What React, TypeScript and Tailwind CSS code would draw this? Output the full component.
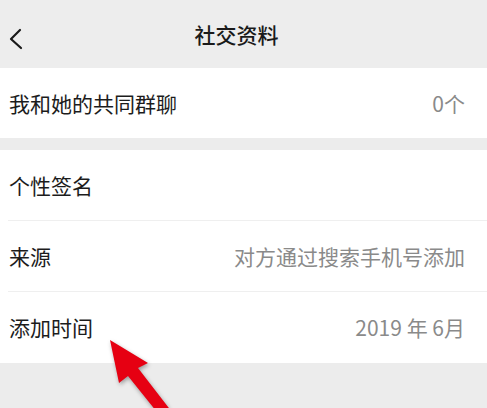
import React from "react";

const font = { fontFamily: '"Noto Sans CJK SC", "Noto Sans", sans-serif' };

function Row({ label, value, border }: { label: string; value?: string; border?: boolean }) {
  return (
    <div className="relative flex h-[71px] items-center justify-between pl-[9px] pr-[22px]">
      <span className="text-[21px] text-[#1c1c1c] leading-none">{label}</span>
      {value && <span className="text-[21px] text-[#8a8a8a] leading-none">{value}</span>}
      {border && <div className="absolute bottom-0 left-[8px] right-0 h-px bg-[#efefef]" />}
    </div>
  );
}

export default function App() {
  return (
    <div className="relative h-[408px] w-full overflow-hidden bg-[#ececec]" style={font}>
      <div className="relative flex h-[68px] items-center justify-center bg-[#ededed] pr-[14px]">
        <svg className="absolute left-[8px] top-[28px]" width="16" height="22" viewBox="0 0 16 22">
          <path d="M12 2 L3 11 L13 20" fill="none" stroke="#1a1a1a" strokeWidth="2.2" strokeLinecap="round" strokeLinejoin="round" />
        </svg>
        <span className="text-[21px] font-medium text-[#1a1a1a] leading-none">社交资料</span>
      </div>
      <div className="bg-white">
        <div className="flex h-[70px] items-center justify-between pl-[9px] pr-[22px]">
          <span className="text-[21px] text-[#1c1c1c] leading-none">我和她的共同群聊</span>
          <span className="text-[21px] text-[#8a8a8a] leading-none">0个</span>
        </div>
      </div>
      <div className="h-[12px]" />
      <div className="bg-white">
        <Row label="个性签名" border />
        <Row label="来源" value="对方通过搜索手机号添加" border />
        <Row label="添加时间" value="2019 年 6月" />
      </div>
      <svg className="absolute left-0 top-0" width="487" height="408" viewBox="0 0 487 408" style={{ filter: "drop-shadow(1px 2px 2px rgba(0,0,0,0.35))" }}>
        <polygon
          points="110,340 148,363 138,368 182,425 173,432 128,376 119,383"
          fill="#e60012"
        />
      </svg>
    </div>
  );
}
